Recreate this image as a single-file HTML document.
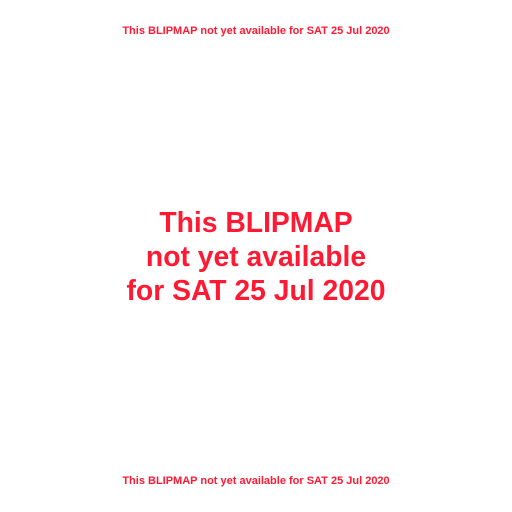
<!DOCTYPE html>
<html><head><style>
html,body{margin:0;padding:0;background:#fff;width:512px;height:512px;overflow:hidden}
div{position:absolute;left:0;width:512px;text-align:center;color:#ff1a33;font-family:"Liberation Sans",sans-serif;font-weight:bold;white-space:nowrap}
.s{font-size:11px;line-height:13px}
.b{font-size:28.3px;line-height:34px}
</style></head><body>
<div class="s" style="top:25px">This BLIPMAP not yet available for SAT 25 Jul 2020</div>
<div class="b" style="top:205px">This BLIPMAP<br>not yet available<br>for SAT 25 Jul 2020</div>
<div class="s" style="top:475px">This BLIPMAP not yet available for SAT 25 Jul 2020</div>
</body></html>
